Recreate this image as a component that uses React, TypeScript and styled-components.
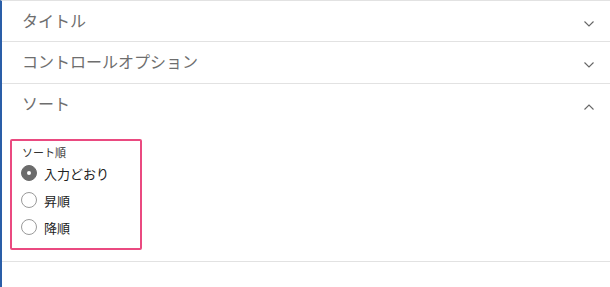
import React from "react";
import styled, { createGlobalStyle } from "styled-components";

const Global = createGlobalStyle`
  html, body { margin: 0; padding: 0; background: #fff; }
  body { font-family: "Noto Sans CJK JP", "Noto Sans", sans-serif; }
`;

const Panel = styled.div`
  width: 610px;
  height: 287px;
  box-sizing: border-box;
  border-left: 2px solid #2a5ea8;
  border-top: 1px solid #e2e2e2;
  background: #fff;
`;

const Section = styled.section`
  border-bottom: 1px solid #e2e2e2;
`;

const Header = styled.div<{ $h: number }>`
  height: ${(p) => p.$h}px;
  display: flex;
  align-items: center;
  justify-content: space-between;
  padding: 0 16px 0 20px;
  box-sizing: border-box;
`;

const HeaderTitle = styled.span`
  font-size: 16px;
  line-height: 20px;
  color: #6e6e6e;
  margin-top: -3px;
`;

const ChevronBox = styled.span`
  display: block;
  margin-top: 4px;
  line-height: 0;
`;

const Body = styled.div`
  padding: 14px 0 11px 8px;
`;

const Highlight = styled.div`
  width: 132px;
  box-sizing: border-box;
  border: 2px solid #ea4a80;
  border-radius: 2px;
  padding: 4px 0 8px 10px;
`;

const GroupLabel = styled.div`
  font-size: 11px;
  line-height: 14px;
  color: #333;
  margin-bottom: 1px;
`;

const Row = styled.label`
  height: 26px;
  margin-top: 1px;
  display: flex;
  align-items: center;
  gap: 7px;
  font-size: 13px;
  color: #222;
  margin-left: -1px;
`;

const Dot = styled.span<{ $checked?: boolean }>`
  width: 16px;
  height: 16px;
  border-radius: 50%;
  box-sizing: border-box;
  display: flex;
  align-items: center;
  justify-content: center;
  background: ${(p) => (p.$checked ? "#6b6b6b" : "#fff")};
  border: 1px solid ${(p) => (p.$checked ? "#6b6b6b" : "#9a9a9a")};
  &::after {
    content: "";
    width: 4px;
    height: 4px;
    border-radius: 50%;
    background: #fff;
    display: ${(p) => (p.$checked ? "block" : "none")};
  }
`;

const Chevron = ({ up }: { up?: boolean }) => (
  <ChevronBox>
    <svg width="10" height="6" viewBox="0 0 10 6">
      <polyline
        points={up ? "0.5,5.5 5,1 9.5,5.5" : "0.5,0.5 5,5 9.5,0.5"}
        fill="none"
        stroke="#666"
        strokeWidth="1.1"
      />
    </svg>
  </ChevronBox>
);

const options = [
  { label: "入力どおり", checked: true },
  { label: "昇順" },
  { label: "降順" },
];

export default function App() {
  return (
    <>
      <Global />
      <Panel>
        <Section>
          <Header $h={40}>
            <HeaderTitle>タイトル</HeaderTitle>
            <Chevron />
          </Header>
        </Section>
        <Section>
          <Header $h={41}>
            <HeaderTitle>コントロールオプション</HeaderTitle>
            <Chevron />
          </Header>
        </Section>
        <Section>
          <Header $h={41}>
            <HeaderTitle>ソート</HeaderTitle>
            <Chevron up />
          </Header>
          <Body>
            <Highlight>
              <GroupLabel>ソート順</GroupLabel>
              {options.map((o) => (
                <Row key={o.label}>
                  <Dot $checked={o.checked} />
                  {o.label}
                </Row>
              ))}
            </Highlight>
          </Body>
        </Section>
      </Panel>
    </>
  );
}
